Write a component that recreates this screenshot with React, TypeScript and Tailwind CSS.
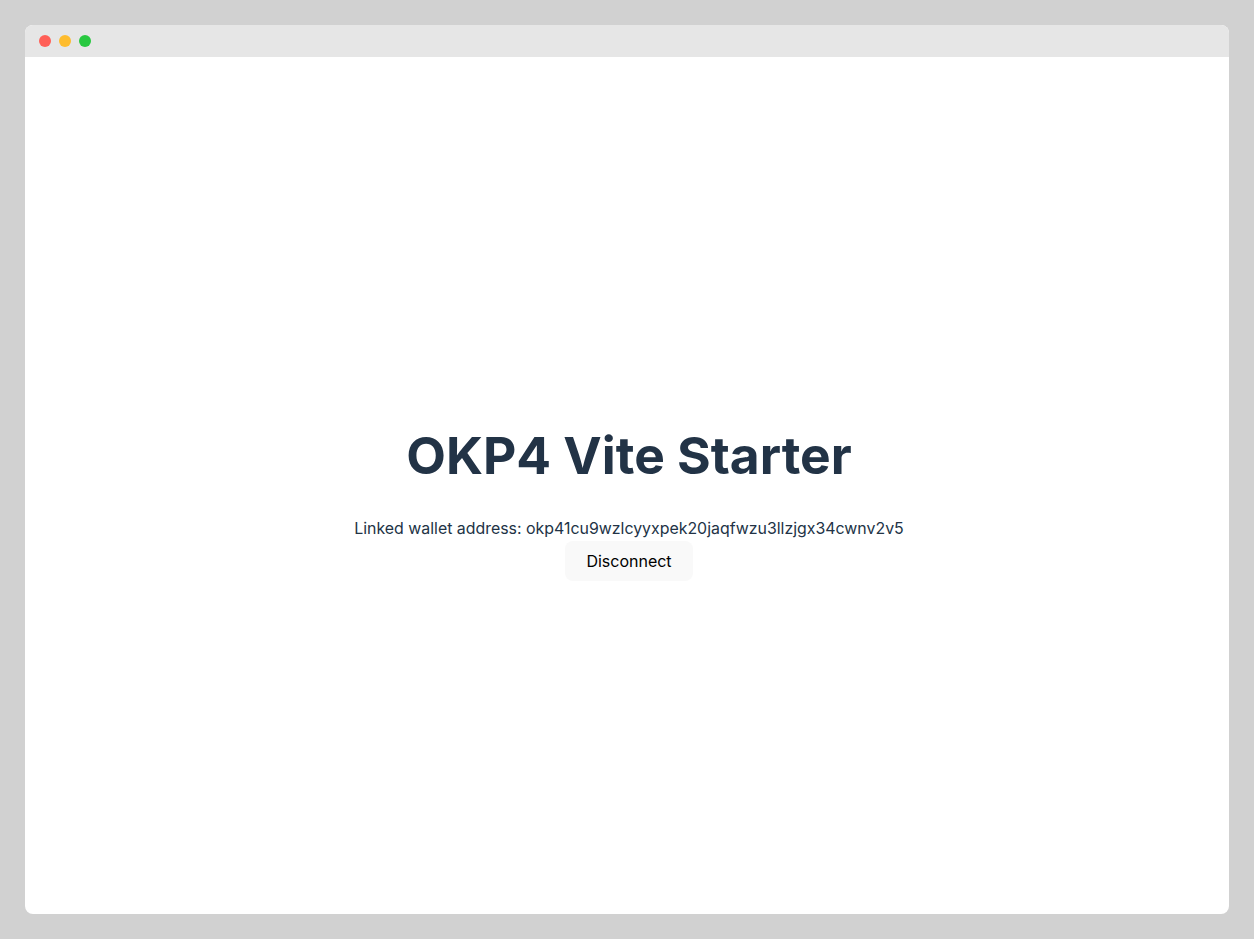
export default function App() {
  return (
    <div className="h-[939px] w-full bg-[#d1d1d1] p-[25px]" style={{ fontFamily: 'Inter, "Noto Sans", sans-serif' }}>
      <div className="flex h-full flex-col overflow-hidden rounded-lg bg-white">
        {/* title bar */}
        <div className="flex h-8 shrink-0 items-center gap-2 bg-[#e6e6e6] px-[14px]">
          <span className="h-3 w-3 rounded-full bg-[#ff5f57]" />
          <span className="h-3 w-3 rounded-full bg-[#febc2e]" />
          <span className="h-3 w-3 rounded-full bg-[#28c840]" />
        </div>

        <div className="flex flex-1 flex-col items-center justify-center pl-1 pt-10">
          <h1 className="text-[51.5px] font-bold leading-none text-[#223346]">OKP4 Vite Starter</h1>
          <p className="mt-9 text-[15.9px] leading-6 text-[#223346]">
            Linked wallet address: okp41cu9wzlcyyxpek20jaqfwzu3llzjgx34cwnv2v5
          </p>
          <button className="rounded-lg bg-[#f9f9f9] px-[21px] py-2 text-base text-black">
            Disconnect
          </button>
        </div>
      </div>
    </div>
  )
}
